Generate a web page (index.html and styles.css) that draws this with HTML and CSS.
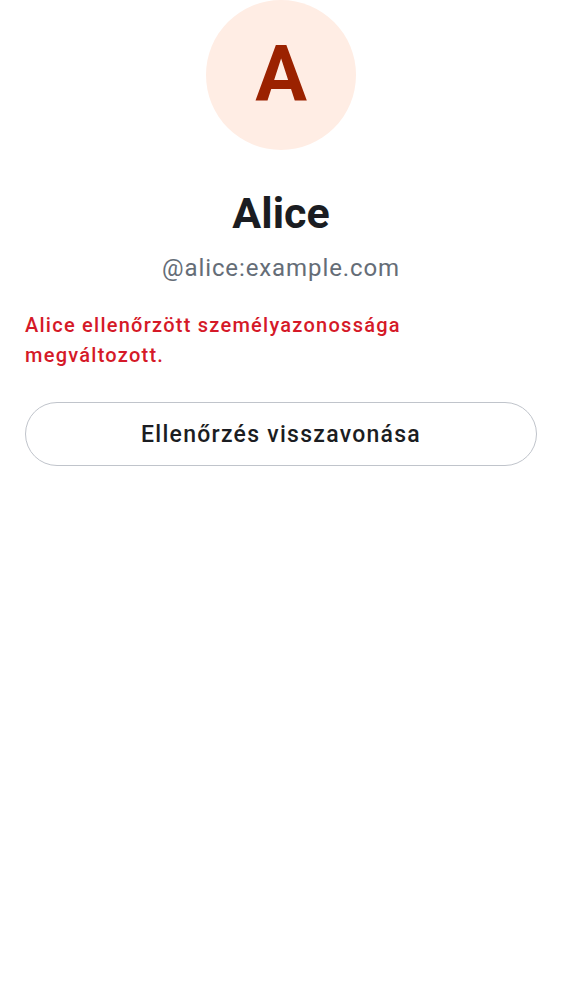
FILE: index.html
```html
<!DOCTYPE html>
<html lang="hu">
<head>
<meta charset="utf-8">
<link rel="stylesheet" href="styles.css">
</head>
<body>
<main class="page">
  <section class="profile">
    <div class="avatar"><span class="avatar-letter">A</span></div>
    <h1 class="name">Alice</h1>
    <p class="handle">@alice:example.com</p>
  </section>
  <p class="warning">Alice ellenőrzött személyazonossága megváltozott.</p>
  <button class="btn-outline" type="button">Ellenőrzés visszavonása</button>
</main>
</body>
</html>
```
FILE: styles.css
```css
html, body {
  margin: 0;
  padding: 0;
  background: #ffffff;
}
body {
  font-family: Roboto, "Noto Sans", sans-serif;
  color: #1b1d22;
}
.page {
  display: flex;
  flex-direction: column;
  padding: 0 25px;
}
.profile {
  display: flex;
  flex-direction: column;
  align-items: center;
}
.avatar {
  width: 150px;
  height: 150px;
  border-radius: 50%;
  background: #ffede4;
  display: flex;
  align-items: center;
  justify-content: center;
}
.avatar-letter {
  font-size: 77px;
  font-weight: 700;
  color: #9b2200;
  line-height: 1;
}
.name {
  margin: 37px 0 0;
  font-size: 43px;
  font-weight: 700;
  line-height: 52px;
  color: #1b1d22;
}
.handle {
  margin: 14px 0 0;
  font-size: 24px;
  font-weight: 400;
  line-height: 30px;
  letter-spacing: 0.9px;
  color: #656d77;
}
.warning {
  margin: 27px 0 0;
  font-size: 20px;
  font-weight: 500;
  line-height: 30px;
  letter-spacing: 1.25px;
  color: #d51928;
}
.btn-outline {
  box-sizing: border-box;
  margin-top: 32px;
  padding: 0;
  height: 64px;
  border: 1px solid #c0c4cb;
  border-radius: 32px;
  background: #ffffff;
  font-family: Roboto, "Noto Sans", sans-serif;
  font-size: 23px;
  font-weight: 500;
  letter-spacing: 1.27px;
  color: #1b1d22;
}
```
